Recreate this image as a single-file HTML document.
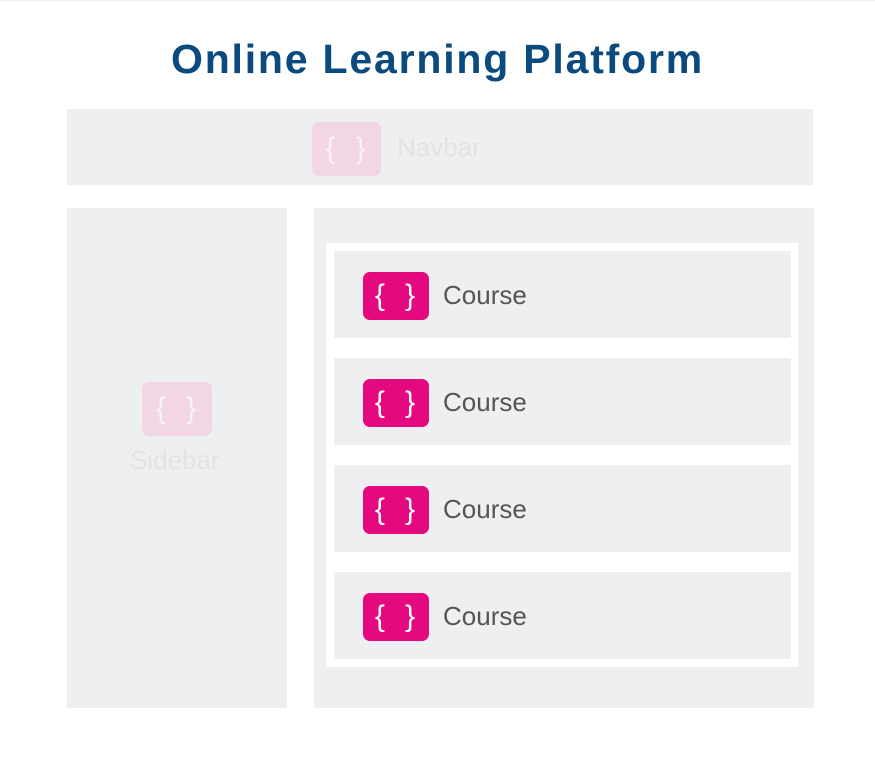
<!DOCTYPE html>
<html><head><style>
body{margin:0;width:875px;height:766px;background:#fff;position:relative;overflow:hidden;font-family:"Liberation Sans",sans-serif}
.a{position:absolute}
.g{background:#eeeff1}
.ic{position:absolute;border-radius:7px;display:flex;align-items:center;justify-content:center;color:#fff;font-size:30px;font-family:"Liberation Sans",sans-serif;letter-spacing:6px;padding-left:4px;box-sizing:border-box}
.pk{background:#e5097f}
.lp{background:#f2d6e3;color:#f8f4f6}
.t{position:absolute;font-size:26px;color:#555}
</style></head><body>
<div class="a" style="left:0;top:0;width:875px;height:1px;background:#eee"></div>
<div class="a" style="left:0;top:36px;width:875px;text-align:center;font-size:41px;font-weight:bold;color:#0b4a7f;letter-spacing:1.8px">Online Learning Platform</div>
<div class="a g" style="left:67px;top:109px;width:746px;height:76px"></div>
<div class="ic lp" style="left:312px;top:122px;width:69px;height:54px">{ }</div>
<div class="t" style="left:397px;top:132px;color:#e3e3e6">Navbar</div>
<div class="a g" style="left:67px;top:208px;width:220px;height:500px"></div>
<div class="ic lp" style="left:142px;top:382px;width:70px;height:54px">{ }</div>
<div class="t" style="left:130px;top:445px;color:#e3e3e6">Sidebar</div>
<div class="a g" style="left:314px;top:208px;width:500px;height:500px"></div>
<div class="a" style="left:326px;top:243px;width:472px;height:424px;background:#fff"></div>
<div class="a g" style="left:334px;top:251px;width:457px;height:87px"></div>
<div class="a g" style="left:334px;top:358px;width:457px;height:87px"></div>
<div class="a g" style="left:334px;top:465px;width:457px;height:87px"></div>
<div class="a g" style="left:334px;top:572px;width:457px;height:87px"></div>
<div class="ic pk" style="left:363px;top:272px;width:66px;height:48px">{ }</div>
<div class="ic pk" style="left:363px;top:379px;width:66px;height:48px">{ }</div>
<div class="ic pk" style="left:363px;top:486px;width:66px;height:48px">{ }</div>
<div class="ic pk" style="left:363px;top:593px;width:66px;height:48px">{ }</div>
<div class="t" style="left:443px;top:280px">Course</div>
<div class="t" style="left:443px;top:387px">Course</div>
<div class="t" style="left:443px;top:494px">Course</div>
<div class="t" style="left:443px;top:601px">Course</div>
</body></html>
